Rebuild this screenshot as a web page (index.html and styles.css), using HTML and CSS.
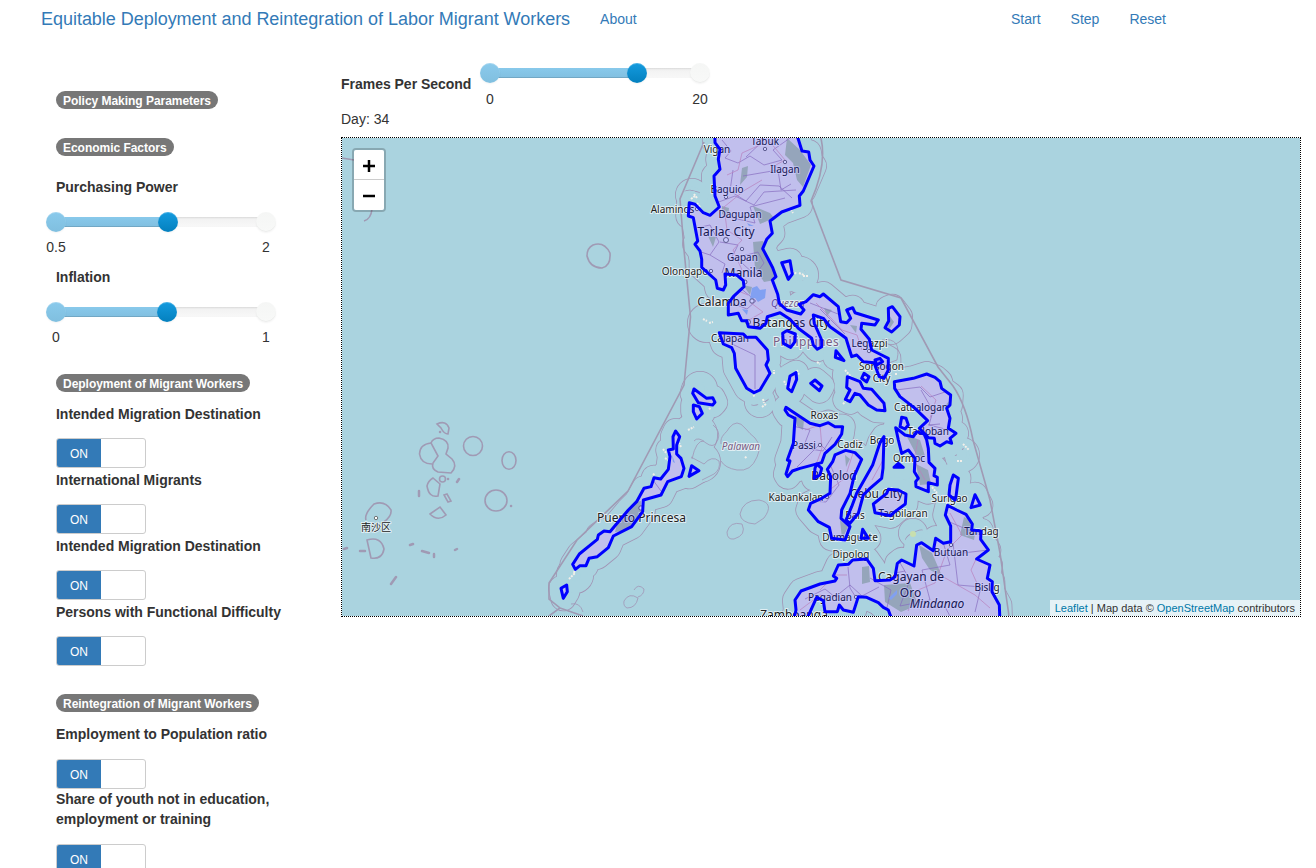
FILE: index.html
```html
<!DOCTYPE html>
<html lang="en">
<head>
<meta charset="utf-8">
<title>Equitable Deployment and Reintegration of Labor Migrant Workers</title>
<link rel="stylesheet" href="styles.css">
</head>
<body>
<nav class="navbar">
  <a class="brand">Equitable Deployment and Reintegration of Labor Migrant Workers</a>
  <a class="nav-link">About</a>
  <div class="nav-right"><a class="nav-link">Start</a><a class="nav-link">Step</a><a class="nav-link">Reset</a></div>
</nav>
<div class="layout">
  <aside class="sidebar">
    <div class="heading"><span class="badge">Policy Making Parameters</span></div>
    <div class="heading economic"><span class="badge">Economic Factors</span></div>
    <div class="range">
      <label>Purchasing Power</label>
      <div class="slider"><div class="track"><div class="fill" style="width:53.3%"></div><i class="knob start"></i><i class="knob current" style="left:53.3%"></i><i class="knob end"></i></div><div class="ticks"><span>0.5</span><span>2</span></div></div>
    </div>
    <div class="range">
      <label>Inflation</label>
      <div class="slider"><div class="track"><div class="fill" style="width:53%"></div><i class="knob start"></i><i class="knob current" style="left:53%"></i><i class="knob end"></i></div><div class="ticks"><span>0</span><span>1</span></div></div>
    </div>
    <div class="heading group"><span class="badge">Deployment of Migrant Workers</span></div>
    <div class="option"><label>Intended Migration Destination</label><div class="toggle"><span>ON</span></div></div>
    <div class="option"><label>International Migrants</label><div class="toggle"><span>ON</span></div></div>
    <div class="option"><label>Intended Migration Destination</label><div class="toggle"><span>ON</span></div></div>
    <div class="option"><label>Persons with Functional Difficulty</label><div class="toggle"><span>ON</span></div></div>
    <div class="heading group second"><span class="badge">Reintegration of Migrant Workers</span></div>
    <div class="option ratio"><label>Employment to Population ratio</label><div class="toggle"><span>ON</span></div></div>
    <div class="option"><label>Share of youth not in education, employment or training</label><div class="toggle"><span>ON</span></div></div>
  </aside>
  <main class="content">
    <div class="fps">
      <label>Frames Per Second</label>
      <div class="slider"><div class="track"><div class="fill" style="width:70%"></div><i class="knob start"></i><i class="knob current" style="left:70%"></i><i class="knob end"></i></div><div class="ticks"><span>0</span><span>20</span></div></div>
    </div>
    <div class="day">Day: 34</div>
    <div class="map">
      <svg class="map-svg" viewBox="342 138 958 478">
        <defs>
          <g id="islands">
            <path d="M797 130L797.3 136L802 151L808.7 152L810 160L814 166L803.3 191L799.3 196L800 205.3L781.7 212L770 221L772.3 233.3L766.7 239.3L762.7 248.7L768.3 259.3L772.7 267.7L776 276.7L772.3 280L777.7 294.3L779.3 303.3L786.7 310L800.7 314L804 310L799 304.3L806 301.7L813.3 294.7L820 296.7L823.3 294L838.3 306.7L840.7 321.7L846.7 322.7L850.7 318.3L846.7 310L852.7 307.7L855 312.7L878.3 320L875 325L861.7 323.3L861 329.3L869.3 339.3L871.7 350L881.7 355L888.3 358.3L888.3 370L884 378.3L879.3 376.7L876 368.3L874.3 362.7L863.3 361.7L856.7 355L851.7 356.7L846 338.3L841.7 335L830 326.7L823.3 318.3L813.3 315L814.3 323.3L821.7 340L821.7 346.7L817.3 349.3L813.3 345L811.7 338.3L798.3 328.3L790 319.3L780 312.7L767.3 316.7L766 323.3L760 328.3L748.3 326.7L746.7 320.7L741.7 320.7L738.3 313.3L728.3 315L728.3 303.3L733.3 296.7L744 286.7L743.3 280.7L736.7 275L725 274L725.7 285L723.3 290L717.3 288.3L715.7 280L701.7 267.3L701.7 259.3L700 251L695 244.3L697.7 241L693.3 217.7L688.3 216L689.3 202.7L695 204.3L703.3 212.7L710 215.3L719.3 207L715 196L714 176L720 169.3L718.3 159.3L720 149.3L715 142.7L714.7 130Z"/>
            <g transform="translate(680 260) scale(.33333)">
              <path d="M118 218L190 222L200 232L228 232L262 270L265 300L258 315L270 340L240 390L222 398L200 385L167 325L163 280L155 263L130 252Z"/>
              <path d="M305 8L330 2L337 42L325 58Z"/><path d="M625 145L637 140L660 170L658 195L635 216L615 203L626 183Z"/>
              <path d="M308 220L320 212L346 222L345 245L332 262L310 250Z"/><path d="M468 272L492 302L466 292Z"/>
              <path d="M585 300L600 295L608 305L590 315Z"/><path d="M552 340L567 350L560 366L545 355Z"/>
              <path d="M330 348L348 338L350 358L335 395L323 385Z"/><path d="M392 370L405 360L426 378L418 392Z"/>
            </g>
            <g transform="translate(760 360) scale(.33333)">
              <path d="M262 50L300 65L310 85L335 88L350 105L372 130L375 152L350 150L325 135L300 105L285 100L270 125L256 118L270 90L260 82Z"/>
              <path d="M403 65L460 55L500 42L525 52L540 65L545 85L572 105L570 135L560 145L570 175L565 205L588 220L570 235L575 250L560 245L540 258L525 250L523 235L505 233L478 205L503 182L465 145L420 110L404 85Z"/>
              <path d="M425 172L438 175L445 195L435 207L420 200Z"/>
              <path d="M407 203L435 225L460 230L470 215L492 222L500 240L505 265L507 307L525 325L522 347L532 352L532 375L505 368L505 395L468 380L467 365L475 355L463 335L465 295L445 270L425 280L415 240Z"/>
              <path d="M402 322L415 310L430 322Z"/>
              <path d="M78 142L98 155L150 190L180 197L205 188L225 200L248 200L245 222L225 253L195 280L185 308L120 325L97 333L83 350L78 342L90 303L82 300L100 250L105 175L85 165L75 150Z"/>
              <path d="M170 312L185 325L180 345L162 355L165 325Z"/>
              <path d="M225 285L257 271L285 278L305 298L282 350L270 400L245 450L243 475L270 500L255 540L215 535L208 502L175 485L145 450L152 430L185 415L210 400L212 350L202 328L218 305Z"/>
              <path d="M360 248L372 230L369 325L365 355L330 385L310 405L295 460L270 490L258 480L275 440L290 400L338 315Z"/>
              <path d="M340 432L380 400L385 388L415 390L438 402L436 432L405 455L392 467L345 458Z"/>
              <path d="M580 345L595 355L588 410L585 420L567 405L570 375Z"/><path d="M645 404L661 435L633 443Z"/><path d="M308 508L325 535L303 535Z"/>
              <path d="M563 436L590 450L618 463L637 492L635 510L663 513L662 538L685 570L650 597L690 615L682 655L697 665L696 695L718 735L720 790L400 790L385 750L370 742L355 728L320 712L295 710L280 757L250 750L238 735L232 755L195 755L190 722L170 712L155 745L135 790L98 790L108 750L105 720L123 693L180 672L225 663L230 655L220 648L235 615L265 613L278 600L320 597L340 625L345 662L390 660L405 650L412 610L425 600L462 618L470 555L485 548L520 572L527 535L550 550L572 545L572 498L556 465Z"/>
            </g>
            <g transform="translate(540 380) scale(.33333)">
              <path d="M462 27L500 55L518 53L525 67L518 75L475 68L458 40Z"/><path d="M460 75L478 80L487 100L470 117L460 95Z"/>
              <path d="M407 153L419 170L410 195L410 222L423 235L432 265L424 290L383 305L363 345L310 360L308 395L275 440L220 468L205 503L172 530L147 535L138 557L120 557L106 568L98 553L118 522L172 478L175 465L192 453L210 455L225 437L265 390L290 365L312 325L333 320L342 293L362 297L385 268L390 230L385 210L400 207L399 170Z"/>
              <path d="M455 257L477 272L447 289Z"/><path d="M63 625L80 615L82 635L70 655Z"/>
            </g>
          </g>
          <g id="reefs"><circle cx="692" cy="195" r="4"/><circle cx="800" cy="275" r="6"/><circle cx="707" cy="323" r="7"/><circle cx="760" cy="402" r="3"/><circle cx="695" cy="435" r="10"/><circle cx="913" cy="533" r="2"/><circle cx="962" cy="455" r="5"/><circle cx="575" cy="575" r="6"/><circle cx="700" cy="462" r="8"/><circle cx="700" cy="389" r="5"/><circle cx="850" cy="375" r="5"/></g>
          <mask id="land-mask" maskUnits="userSpaceOnUse" x="342" y="138" width="958" height="478"><use class="mask-shape" href="#islands"/></mask>
        </defs>
        <rect class="sea" x="342" y="138" width="958" height="478"/>
        <g class="contour"><use href="#islands"/><use href="#reefs"/></g>
        <g class="contour-inner"><use href="#islands"/><use href="#reefs"/></g>
        <g class="boundary">
          <path d="M821 138Q827 165 811 201L841 280L901 298L938 367L953 386Q966 405 973 440L990 500L1000 553L1009 616"/>
          <path d="M704 142L680 199L684 250L690.500 317L684 385L628 491L577 540L549 583V599L560 608L549 616M560 608L583 616"/>
          <path d="M342 158L354 160M372 209Q371 219 364 221"/>
          <circle cx="473" cy="446" r="9.500"/><ellipse cx="509" cy="460.500" rx="7" ry="8.700"/><ellipse cx="496" cy="500.500" rx="11" ry="10.500"/>
          <path d="M437 424Q446 420 449 428L448 434Q444 434 441 428ZM431 443Q433 438 439 438Q449 440 448 448L446 454L452 459Q458 466 451 473L438 472Q431 469 433 463L438 456Z"/>
          <path d="M431 443Q420 444 419.500 454Q421 464 432 464M433 478L440 484L438 496Q429 498 427 486Q428 481 433 478ZM430 514L440 507L446 515Q438 522 430 514ZM366 520Q364 514 374 504Q385 500 391 510Q392 516 384 522M367 540Q381 536 384 549Q382 560 371 558Z"/>
          <circle cx="442.500" cy="479" r="3"/><path d="M444 495L447 494L451 501L448 502ZM593 245Q604 241 610 253Q611 266 602 268Q590 268 587 256Q587 248 593 245Z"/>
        </g>
        <path class="reef-marks" d="M344 549L347 548M360 551H365M410 545L413 544M422 551L429 553M434 554V557M455 550L457 549M391 584L396 577M419 491V496M457 482L459 479M511 506h.1M440 432h.1M448 479h.1"/>
        <g class="coastal">
          <path d="M694 441Q698 436 706 443Q713 448 716 443Q721 436 717 429L713 425M721 444C720 435 726 434 729 428Q737 418 745 428Q750 434 755 438Q762 446 757 457Q751 472 737 470Q725 468 721 461M692 459Q696 440 704 441M691 457L704 464Q712 455 719 461Q721 469 714 474L702 480M727 532Q730 521 742 524Q747 535 734 539Q727 540 727 532ZM740 514Q743 500 759 500Q775 503 764 518L755 524Q741 523 740 514ZM624 601Q629 592 638 598Q636 608 627 608Q623 606 624 601ZM634 590Q638 583 644 589Q644 595 638 597"/>
          <path d="M571 604Q580 602 583 612M882 340Q902 337 897 360L881 366"/>
        </g>
        <path class="specks" d="M691 199l4-3M694 194l3 4M697 203l3 4M703 319l4 2M709 323l4-1M792 271l5 3M799 273l5 2M803 276h6M753 396l3-1M688 430l6-3M681 447l-2-4M745 458l2-2M663 449l4 5M665 458l3 2M569 579l6-6M574 573l1-4M774 374v-4M797 370l2 5M817 362l3 2M843 404l3-3M963 444l6 6M957 461h5M958 516l4-2M946 503l4-1M845 370l8 9M762 407l4-3M858 382l6 3M896 373v3M709 408l2 2M789 207l4 6M766 352l2 4M932 487l5 6M784 381l2 4M763 399l1 4M653 475l2-2M925 409l4 3"/>
        <circle class="park" cx="913" cy="534" r="3"/>
        <use class="land" href="#islands"/>
        <g mask="url(#land-mask)">
          <path class="forest" d="M787 138L800 150L811 165L803 187L797 180L793 163L785 155ZM742 168L748 166L747 177L740 185ZM753 206L770 213L774 218L760 224ZM753 242L763 241L775 265L775 280L764 282L755 268ZM708 236L716 237L713 247ZM722 206L729 208L728 218L722 214ZM743 285L752 287L750 295ZM824 308L832 310L827 316ZM850 325L857 326L856 333ZM889 315L894 322L888 331ZM711 322L720 325L719 335ZM636 502L641 501V515L630 530L615 532L618 520ZM906 435L920 440L925 456L918 458ZM916 464L928 470L931 484L920 485ZM845 455L850 459L846 467ZM795 416L804 420L803 430L797 426ZM840 520L848 527L842 539ZM964 517L977 523L974 540L960 535ZM919 545L932 553L942 576L930 570L922 558ZM862 567L869 566L870 582L862 584ZM884 585L910 583L918 605L901 612L885 602ZM950 400L948 410L944 407Z"/>
          <path class="admin" d="M722 140L731 151L725 158L738 163L750 156L764 165L782 160L773 150L790 138M733 170L730 191L746 201L760 185L779 186L792 198M716 203L735 196L754 205L764 192L796 190M746 157L765 139M743 176L778 170L781 190L791 184M724 216L755 223L750 207L785 198M696 228L710 225L719 242L710 255L701 252M720 242L738 245L731 259L758 252L764 263L755 275L742 263M710 255L725 264L722 273M739 287L756 301L747 309L737 305M810 303L838 314M820 309L845 334M732 344L755 355V389M650 476L661 491M593 560L618 542M788 425L810 430L803 448L790 443M803 448L823 451L832 437M797 467L820 444L831 455M829 462L839 485L826 502L812 501M896 390L920 387L930 397L948 391M921 390L933 411L929 425L949 430M928 425L940 424M805 599L825 589L835 597L850 585L862 596L879 587M848 567L850 588L860 604M870 578L891 590L885 616M899 561L910 580L900 606L930 600L922 570L950 565L943 542M953 543L958 585L981 587L975 612M945 520L980 535M920 607H945L950 616M963 553L988 550M885 575L905 571"/>
          <path class="road" d="M770 142L785 160L774 166L789 174M762 180L745 190L724 207L727 230L742 240L733 250L742 270L736 290L748 295M727 175L738 170L742 153L760 145M751 303L763 312L749 320M816 303L830 317L842 330L857 335L862 350M805 430L820 425L822 448L817 462M854 450L845 478L823 495M883 460L872 480M918 440L914 460L925 480M921 386L936 400L930 418M950 513L962 535L947 550L935 583L918 590L908 611M940 575L975 595L990 608M820 590L835 575L847 575M800 610L820 595L850 598M977 557L971 570L980 590"/>
          <path class="lake" d="M752 288L757 286L760 290L766 289L765 298L758 302L755 298L750 299ZM742 309L748 310L747 315ZM889 598L897 590L897 594L891 600ZM672 455L675 463L673 462ZM747 223L754 226L749 226Z"/>
        </g>
        <g class="places"><circle cx="765" cy="149" r="1.700"/><circle cx="785" cy="162" r="1.700"/><circle cx="726" cy="197" r="1.700"/><circle cx="697" cy="209" r="1.700"/><circle cx="726" cy="240" r="2.500"/><circle cx="742" cy="249" r="1.700"/><circle cx="711" cy="271" r="1.700"/><circle cx="745" cy="282" r="2"/><circle cx="752" cy="301" r="2.200"/><circle cx="748" cy="322" r="2.500"/><circle cx="820" cy="445" r="1.700"/><circle cx="951" cy="545" r="1.700"/><circle cx="856" cy="597" r="1.700"/><circle cx="376" cy="518" r="1.700"/><circle cx="827" cy="497" r="1.700"/><circle cx="641" cy="508" r="2.200"/><circle cx="869" cy="351" r="1.700"/></g>
        <g class="labels">
          <text x="717" y="153">Vigan</text><text x="765" y="145">Tabuk</text><text x="785" y="173">Ilagan</text><text x="727" y="193">Baguio</text><text x="672.500" y="212.500">Alaminos</text><text x="740" y="218">Dagupan</text><text x="742.500" y="260.500">Gapan</text><text x="685" y="275">Olongapo</text><text x="730" y="342">Calapan</text><text x="869.500" y="347">Legazpi</text><text x="881.500" y="370">Sorsogon</text><text x="881.500" y="382">City</text><text x="921" y="410.500">Catbalogan</text><text x="824.500" y="419">Roxas</text><text x="804" y="448.500">Passi</text><text x="850" y="448">Cadiz</text><text x="882" y="444">Bogo</text><text x="928" y="435">Tacloban</text><text x="909" y="462">Ormoc</text><text x="796" y="501">Kabankalan</text><text x="949.500" y="502">Surigao</text><text x="855" y="519">Bais</text><text x="903" y="517">Tagbilaran</text><text x="850" y="540.500">Dumaguete</text><text x="851" y="558">Dipolog</text><text x="951" y="556">Butuan</text><text x="981.500" y="535">Tandag</text><text x="987" y="590.500">Bislig</text><text x="830" y="601">Pagadian</text><text x="376" y="531">南沙区</text>
          <g class="major"><text x="726" y="235.500">Tarlac City</text><text x="743.500" y="277">Manila</text><text x="722" y="305.500">Calamba</text><text x="791" y="326.500">Batangas City</text><text x="834" y="479.500">Bacolod</text><text x="876.500" y="497.500">Cebu City</text><text x="911" y="581">Cagayan de</text><text x="910.500" y="596.500">Oro</text><text x="794" y="619">Zamboanga</text><text x="641.500" y="522">Puerto Princesa</text><text class="italic" x="937" y="607.500">Mindanao</text></g>
          <g class="region"><text class="italic" x="788" y="307">Quezon</text><text class="italic" x="741" y="450">Palawan</text><text class="country" x="806" y="346">Philippines</text></g>
        </g>
        <use class="overlay" href="#islands"/>
      </svg>
      <div class="zoom"><a><svg viewBox="0 0 14 14"><path d="M7 1V13M1 7H13"/></svg></a><a><svg viewBox="0 0 14 14"><path d="M1 7H13"/></svg></a></div>
      <div class="attribution"><a>Leaflet</a> | Map data © <a>OpenStreetMap</a> contributors</div>
    </div>
  </main>
</div>
</body>
</html>
```

FILE: styles.css
```css
*{box-sizing:border-box}
body{margin:0;height:868px;overflow:hidden;background:#fff;color:#333;font:14px/20px "Liberation Sans",Arial,sans-serif}
a{color:#337ab7;text-decoration:none}
label{font-weight:bold;display:block;letter-spacing:-.02px}
.navbar{height:38px;display:flex;align-items:center;padding:0 150px 1px 41px}
.brand{font-size:18px;letter-spacing:-.03px;margin-right:30px}
.nav-right{display:flex;gap:30px;margin-left:auto}
.layout{display:grid;grid-template-columns:285px 960px;padding-left:56px}
.sidebar{padding-top:53px}
.heading{height:18px;display:flex}
.badge{height:18px;border-radius:10px;background:#777;color:#fff;font-size:12px;font-weight:bold;letter-spacing:-.03px;line-height:12px;padding:4px 7px 2px}
.economic{margin-top:29px;margin-bottom:21px}
.range{height:90px}
.range .slider{margin-top:20px}
.slider{width:210px}
.track{height:10px;border-radius:4px;position:relative;background:linear-gradient(#f1f1f1,#f8f8f8);box-shadow:inset 0 1px 2px #0000001a}
.fill{height:100%;border-radius:4px;background:linear-gradient(#88c9eb,#81bfe0);box-shadow:inset 0 -1px #0000001f}
.knob{position:absolute;width:20px;height:20px;border-radius:50%;top:-5px;transform:translateX(-50%);box-shadow:inset 0 1px 0 #fff3,0 1px 2px #0000000d}
.start{left:0;background:linear-gradient(#8acaec,#80bfdf)}
.current{background:linear-gradient(#149bdf,#0480be)}
.end{left:100%;background:linear-gradient(#f5f6f5,#f8f9f8);box-shadow:inset 0 -1px #0000000d,0 1px 2px #0000000d}
.ticks{display:flex;justify-content:space-between;margin:10px -30px 0}
.fps .ticks{margin-top:11px}
.ticks span{width:60px;text-align:center}
.group{margin-top:17px;margin-bottom:12px}
.second{margin-top:28px}
.option label{padding-bottom:14px;box-sizing:content-box}
.ratio label,.option:last-child label{padding-bottom:15px}
.option:last-child label{width:225px}
.toggle{width:90px;height:30px;border:1px solid #ccc;border-radius:3px;background:#fff;margin-bottom:2px;overflow:hidden}
.ratio .toggle{margin-bottom:0}
.toggle span{display:block;width:44px;height:28px;background:#337ab7;color:#fff;font-size:12px;line-height:30px;text-align:center}
.content{padding-top:30px}
.fps{display:flex;height:41px}
.fps label{width:149px;padding-top:6px}
.day{height:28px}
.map{position:relative;width:960px;height:480px;border:1px dotted #000;overflow:hidden}
.map-svg{display:block;width:958px;height:478px}
.sea{fill:#aad3df}
.contour,.contour-inner{fill:#aad3df;stroke-linejoin:round}
.contour path,.contour circle,.contour-inner path,.contour-inner circle,#islands path{vector-effect:non-scaling-stroke}
.contour{stroke:#a194b5;stroke-width:26px}
.contour-inner{stroke:#aad3df;stroke-width:24.400px}
.boundary{fill:none;stroke:#a09ab4;stroke-width:1.600}
.coastal{fill:none;stroke:#a194b5;stroke-width:.8}
.reef-marks{fill:none;stroke:#a09ab4;stroke-width:2.500;stroke-linecap:round}
.specks{fill:none;stroke:#f2efe9;stroke-width:2;stroke-dasharray:2 1}
.park{fill:#c8dfaf}
.mask-shape{fill:#fff}
.land{fill:#f2efe9}
.forest{fill:#bbcfab}
.admin{fill:none;stroke:#a888b0;stroke-width:.7}
.road{fill:none;stroke:#e5a2ad;stroke-width:.7}
.lake{fill:#a2c8ef}
.places{fill:#fff;stroke:#555;stroke-width:.8}
.labels{font:10px "Noto Sans","Noto Sans CJK SC",sans-serif;fill:#222;text-anchor:middle;paint-order:stroke;stroke:#ffffffa6;stroke-width:2;stroke-linejoin:round}
.major{font-size:12px}
.italic{font-style:italic}
.region{fill:#785c84}
.country{font-size:12px;letter-spacing:.4px}
.overlay{fill:#00f;fill-opacity:.2;stroke:#00f;stroke-width:3px;stroke-linejoin:round}
.zoom{position:absolute;left:10px;top:10px;width:34px;border:2px solid #0003;border-radius:4px;background-clip:padding-box}
.zoom a{display:flex;align-items:center;justify-content:center;width:30px;height:30px;background:#fff}
.zoom a:first-child{padding-top:3px;border-bottom:1px solid #ccc;border-radius:2px 2px 0 0}
.zoom a:last-child{padding-top:2px;border-radius:0 0 2px 2px}
.zoom svg{width:14px;height:14px;stroke:#000;stroke-width:2.500}
.attribution{position:absolute;right:0;bottom:0;background:#ffffffb3;padding:0 5px;font-size:11px;line-height:16px;white-space:nowrap}
.attribution a{color:#0078a8}
```
